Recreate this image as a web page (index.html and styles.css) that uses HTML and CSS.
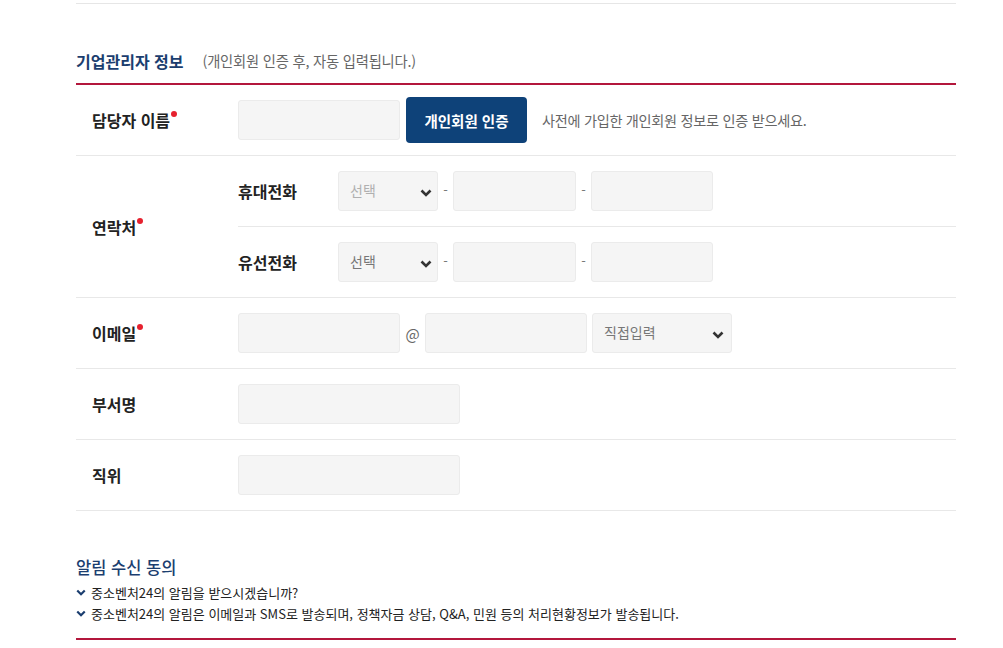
FILE: index.html
```html
<!DOCTYPE html>
<html lang="ko">
<head>
<meta charset="utf-8">
<title>기업관리자 정보</title>
<link rel="stylesheet" href="styles.css">
</head>
<body>
<div class="wrap">
  <div class="prev-section"></div>

  <div class="section-head">
    <h2 class="section-title">기업관리자 정보</h2>
    <span class="section-sub">(개인회원 인증 후, 자동 입력됩니다.)</span>
  </div>

  <div class="form-table">
    <div class="row">
      <div class="label req">담당자 이름</div>
      <div class="field">
        <input class="inp w162" type="text">
        <button class="btn-auth" type="button">개인회원 인증</button>
        <span class="help">사전에 가입한 개인회원 정보로 인증 받으세요.</span>
      </div>
    </div>

    <div class="row">
      <div class="label req">연락처</div>
      <div class="subrows">
        <div class="subrow">
          <div class="sublabel">휴대전화</div>
          <div class="sel w100 pale"><span>선택</span><svg class="chev" viewBox="0 0 12 8"><path d="M1.5 1.5 6 6l4.5-4.5" /></svg></div>
          <span class="dash">-</span>
          <input class="inp w123" type="text">
          <span class="dash">-</span>
          <input class="inp w122" type="text">
        </div>
        <div class="subrow">
          <div class="sublabel">유선전화</div>
          <div class="sel w100"><span>선택</span><svg class="chev" viewBox="0 0 12 8"><path d="M1.5 1.5 6 6l4.5-4.5" /></svg></div>
          <span class="dash">-</span>
          <input class="inp w123" type="text">
          <span class="dash">-</span>
          <input class="inp w122" type="text">
        </div>
      </div>
    </div>

    <div class="row">
      <div class="label req">이메일</div>
      <div class="field">
        <input class="inp w162" type="text">
        <span class="at">@</span>
        <input class="inp w162" type="text">
        <div class="sel w140"><span>직접입력</span><svg class="chev" viewBox="0 0 12 8"><path d="M1.5 1.5 6 6l4.5-4.5" /></svg></div>
      </div>
    </div>

    <div class="row">
      <div class="label">부서명</div>
      <div class="field"><input class="inp w222" type="text"></div>
    </div>

    <div class="row">
      <div class="label">직위</div>
      <div class="field"><input class="inp w222" type="text"></div>
    </div>
  </div>

  <div class="notice">
    <h3 class="notice-title">알림 수신 동의</h3>
    <ul class="notice-list">
      <li><svg class="tick" viewBox="0 0 12 8"><path d="M1.5 1.5 6 6l4.5-4.5" /></svg>중소벤처24의 알림을 받으시겠습니까?</li>
      <li><svg class="tick" viewBox="0 0 12 8"><path d="M1.5 1.5 6 6l4.5-4.5" /></svg>중소벤처24의 알림은 이메일과 SMS로 발송되며, 정책자금 상담, Q&amp;A, 민원 등의 처리현황정보가 발송됩니다.</li>
    </ul>
  </div>
</div>
</body>
</html>
```

FILE: styles.css
```css
* { box-sizing: border-box; }
html, body { margin: 0; padding: 0; background: #fff; }
body {
  font-family: "Noto Sans CJK KR", "Noto Sans", sans-serif;
  color: #222;
}
.wrap {
  width: 880px;
  margin-left: 76px;
}
.prev-section {
  height: 4px;
  border-bottom: 1px solid #e6e6e6;
}
.section-head {
  height: 81px;
  display: flex;
  align-items: flex-end;
  padding-bottom: 11px;
  border-bottom: 2px solid #b3173c;
}
.section-title {
  margin: 0;
  font-size: 16px;
  line-height: 22px;
  font-weight: 700;
  color: #1b3e6f;
}
.section-sub {
  margin-left: 19px;
  font-size: 14.3px;
  line-height: 22px;
  color: #666;
  letter-spacing: -0.2px;
}
.row {
  display: flex;
  border-bottom: 1px solid #e8e8e8;
}
.label {
  width: 162px;
  flex: none;
  display: flex;
  align-items: center;
  padding-left: 16px;
  font-size: 16px;
  font-weight: 700;
  color: #222;
}
.label.req::after {
  content: "";
  width: 6px;
  height: 6px;
  border-radius: 50%;
  background: #e6212e;
  align-self: center;
  margin: -12px 0 0 1px;
}
.field {
  height: 70px;
  display: flex;
  align-items: center;
  flex: 1;
}
.inp {
  height: 40px;
  border: 1px solid #ebebeb;
  background: #f5f5f5;
  border-radius: 3px;
  font: inherit;
  padding: 0 10px;
  outline: none;
}
.w162 { width: 162px; }
.w123 { width: 123px; }
.w122 { width: 122px; }
.w222 { width: 222px; }
.w100 { width: 100px; }
.w140 { width: 140px; }
.btn-auth {
  margin-left: 6px;
  width: 121px;
  height: 46px;
  border: none;
  border-radius: 4px;
  background: #0e4279;
  color: #fff;
  font: inherit;
  font-size: 14.5px;
  font-weight: 700;
  cursor: pointer;
}
.help {
  margin-left: 15px;
  font-size: 14.2px;
  color: #666;
  letter-spacing: -0.3px;
}
.subrows { flex: 1; }
.subrow {
  height: 71px;
  display: flex;
  align-items: center;
  border-bottom: 1px solid #e8e8e8;
}
.subrow:last-child {
  height: 70px;
  border-bottom: none;
}
.sublabel {
  width: 100px;
  font-size: 16px;
  font-weight: 700;
  color: #222;
}
.sel {
  height: 40px;
  border: 1px solid #ebebeb;
  background: #f5f5f5;
  border-radius: 3px;
  display: flex;
  align-items: center;
  justify-content: space-between;
  padding: 0 5px 0 11px;
  font-size: 14px;
  color: #777;
}
.sel.pale { color: #b0b0b0; }
.sel span { margin-top: -3px; }
.chev {
  width: 12px;
  height: 8px;
  fill: none;
  stroke: #333;
  stroke-width: 2.6;
  margin-top: 4px;
}
.dash {
  width: 15px;
  text-align: center;
  font-size: 13px;
  color: #777;
  margin-top: -4px;
}
.at {
  width: 25px;
  text-align: center;
  font-size: 15px;
  color: #666;
}
.sel.w140 { margin-left: 5px; padding-right: 7px; }
.notice {
  padding-top: 44px;
  border-bottom: 2px solid #b3173c;
  padding-bottom: 14px;
}
.notice-title {
  margin: 0;
  font-size: 16.5px;
  line-height: 24px;
  font-weight: 500;
  color: #1b3e6f;
}
.notice-list {
  list-style: none;
  margin: 3px 0 0;
  padding: 0;
}
.notice-list li {
  display: flex;
  align-items: center;
  font-size: 13px;
  line-height: 21px;
  color: #222;
  letter-spacing: 0;
}
.tick {
  width: 10px;
  height: 7px;
  fill: none;
  stroke: #1b3e6f;
  stroke-width: 2.6;
  margin-right: 5px;
}
```
